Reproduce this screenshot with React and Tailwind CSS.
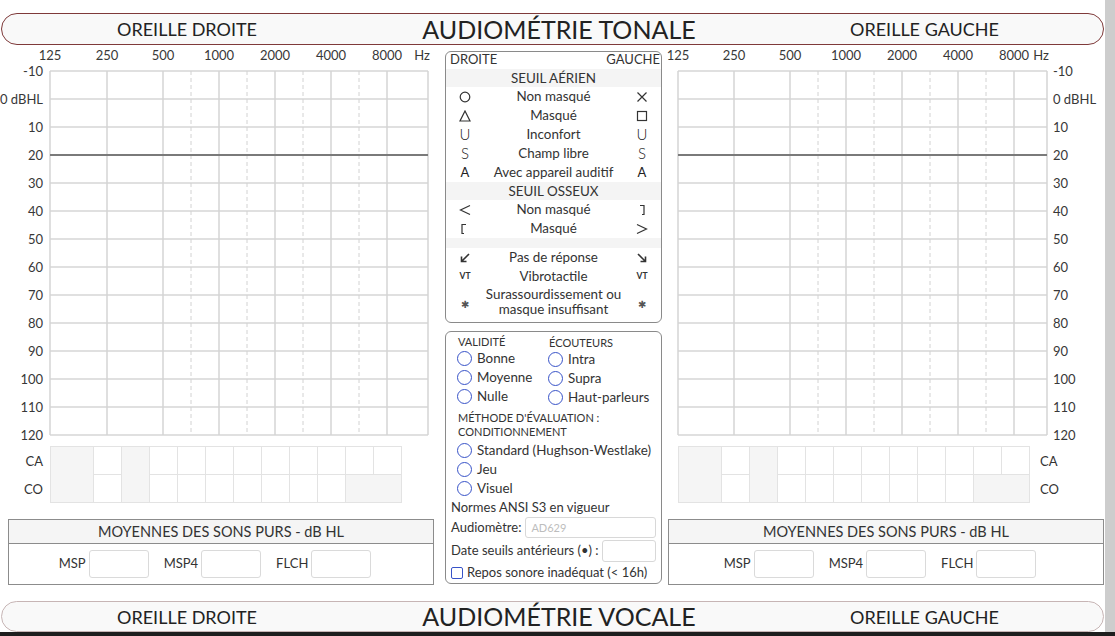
import React from 'react';

const leftCfg = {
  width: 445,
  x0: 50,
  offsets: [0, 57, 113, 141, 169, 197, 225, 253, 281, 309, 337],
  right: 428,
  hz: 422,
  yLabelX: 43,
  anchor: 'end',
};

const rightCfg = {
  width: 443,
  x0: 16,
  offsets: [0, 56, 112, 140, 168, 196, 224, 252, 280, 308, 336],
  right: 385,
  hz: 379,
  yLabelX: 391,
  anchor: 'start',
};

const freqs = [
  ['125', 0],
  ['250', 1],
  ['500', 2],
  ['1000', 4],
  ['2000', 6],
  ['4000', 8],
  ['8000', 10],
];

const levels = ['-10', '0 dBHL', '10', '20', '30', '40', '50', '60', '70', '80', '90', '100', '110', '120'];

// Audiogram grid (chart), labels kept as real svg text
function Audiogram({ cfg }) {
  const top = 26;
  const rowH = 28;
  const bottom = top + rowH * 13;
  const x0 = cfg.x0;
  return (
    <svg width={cfg.width} height={400} className="block" fill="#383838">
      {freqs.map(([f, i]) => (
        <text key={f} x={x0 + cfg.offsets[i]} y={15} textAnchor="middle" fontSize="13">
          {f}
        </text>
      ))}
      <text x={cfg.hz} y={15} textAnchor="middle" fontSize="13">
        Hz
      </text>

      {levels.map((l, i) =>
        i === 3 ? null : (
          <line key={l} x1={x0} x2={cfg.right} y1={top + i * rowH} y2={top + i * rowH} stroke="#d6d6d6" strokeWidth="1.5" />
        )
      )}
      {cfg.offsets.map((o, i) => {
        const dashed = i === 3 || i === 5 || i === 7 || i === 9;
        return (
          <line
            key={o}
            x1={x0 + o}
            x2={x0 + o}
            y1={top}
            y2={bottom}
            stroke={dashed ? '#d2d2d2' : '#d4d4d4'}
            strokeWidth={dashed ? 1 : 1.5}
            strokeDasharray={dashed ? '4 3' : undefined}
          />
        );
      })}
      <line x1={cfg.right} x2={cfg.right} y1={top} y2={bottom} stroke="#d4d4d4" strokeWidth="1.5" />
      <line x1={x0} x2={cfg.right} y1={top + 3 * rowH} y2={top + 3 * rowH} stroke="#7a7a7a" strokeWidth="2" />

      {levels.map((l, i) => (
        <text key={l} x={cfg.yLabelX} y={top + i * rowH + 4.5} textAnchor={cfg.anchor} fontSize="13">
          {l}
        </text>
      ))}
    </svg>
  );
}

function MaskingTable() {
  return (
    <div className="grid w-max grid-cols-[42px_repeat(11,27px)] grid-rows-[27px_27px] gap-px bg-[#e3e3e3] p-px">
      <div className="col-start-1 row-span-2 row-start-1 bg-[#f5f5f5]" />
      <div className="col-start-2 row-start-1 bg-white" />
      <div className="col-start-3 row-span-2 row-start-1 bg-[#f5f5f5]" />
      <div className="col-start-4 row-start-1 bg-white" />
      <div className="col-start-5 row-start-1 bg-white" />
      <div className="col-start-6 row-start-1 bg-white" />
      <div className="col-start-7 row-start-1 bg-white" />
      <div className="col-start-8 row-start-1 bg-white" />
      <div className="col-start-9 row-start-1 bg-white" />
      <div className="col-start-10 row-start-1 bg-white" />
      <div className="col-start-11 row-start-1 bg-white" />
      <div className="col-start-12 row-start-1 bg-white" />
      <div className="col-start-2 row-start-2 bg-white" />
      <div className="col-start-4 row-start-2 bg-white" />
      <div className="col-start-5 row-start-2 bg-white" />
      <div className="col-start-6 row-start-2 bg-white" />
      <div className="col-start-7 row-start-2 bg-white" />
      <div className="col-start-8 row-start-2 bg-white" />
      <div className="col-start-9 row-start-2 bg-white" />
      <div className="col-start-10 row-start-2 bg-white" />
      <div className="col-span-2 col-start-11 row-start-2 bg-[#f5f5f5]" />
    </div>
  );
}

function Averages({ className }) {
  return (
    <div className={`border border-[#8c8c8c] text-[13px] ${className}`}>
      <div className="h-[24px] border-b border-[#8c8c8c] bg-[#f5f5f5] text-center text-[14.5px] leading-[23px]">
        MOYENNES DES SONS PURS - dB HL
      </div>
      <div className="flex h-[40px] items-center justify-center gap-[15px] pr-[12px]">
        {['MSP', 'MSP4', 'FLCH'].map((l) => (
          <div key={l} className="flex items-center gap-[3px]">
            <span>{l}</span>
            <div className="h-[28px] w-[60px] rounded-[3px] border border-[#dadada] bg-white" />
          </div>
        ))}
      </div>
    </div>
  );
}

function SectionBar({ title, className }) {
  return (
    <div className={`mx-[1px] grid grid-cols-[370px_374px_1fr] items-center rounded-[16px] border bg-[#f9f9f9] text-[#222] ${className}`}>
      <div className="text-center text-[18px] leading-none">OREILLE DROITE</div>
      <div className="text-center text-[25px] leading-none">{title}</div>
      <div className="text-center text-[18px] leading-none">OREILLE GAUCHE</div>
    </div>
  );
}

const Mark = ({ children, sw = 1.2 }) => (
  <svg width="12" height="12" viewBox="0 0 12 12" fill="none" stroke="#333" strokeWidth={sw}>
    {children}
  </svg>
);

const Sym = ({ children, cls = 'text-[15px] font-light' }) => <span className={`leading-none text-[#222] ${cls}`}>{children}</span>;

const Circle = () => (
  <Mark>
    <circle cx="6" cy="6" r="4.8" />
  </Mark>
);
const Cross = () => (
  <Mark>
    <path d="M1.5 1.5 L10.5 10.5 M10.5 1.5 L1.5 10.5" />
  </Mark>
);
const Tri = () => (
  <Mark>
    <path d="M6 1 L11 11 L1 11 Z" />
  </Mark>
);
const Square = () => (
  <Mark>
    <rect x="1.5" y="1.5" width="9" height="9" />
  </Mark>
);
const LessThan = () => (
  <Mark>
    <path d="M11 1.5 L1.5 6 L11 10.5" />
  </Mark>
);
const GreaterThan = () => (
  <Mark>
    <path d="M1 1.5 L10.5 6 L1 10.5" />
  </Mark>
);
const BracketOpen = () => (
  <Mark>
    <path d="M7 1.5 L3 1.5 L3 10.5 L5 10.5" />
  </Mark>
);
const BracketClose = () => (
  <Mark>
    <path d="M4 1.5 L8 1.5 L8 10.5 L6 10.5" />
  </Mark>
);
const ArrowDL = () => (
  <Mark sw={1.6}>
    <path d="M10 2 L3 9 M2.5 4.5 L2.5 9.5 L7.5 9.5" />
  </Mark>
);
const ArrowDR = () => (
  <Mark sw={1.6}>
    <path d="M2 2 L9 9 M4.5 9.5 L9.5 9.5 L9.5 4.5" />
  </Mark>
);

const VT = () => <span className="text-[8.5px] font-bold leading-none text-[#333]">VT</span>;
const Star = () => <span className="text-[10px] leading-none text-[#555]">✱</span>;

const LegendRow = ({ l, label, r }) => (
  <div className="grid h-[19px] grid-cols-[38px_1fr_38px] items-center">
    <div className="flex justify-center">{l}</div>
    <div className="text-center leading-[19px]">{label}</div>
    <div className="flex justify-center">{r}</div>
  </div>
);

function Legend() {
  return (
    <div className="mt-[6px] h-[272px] rounded-[6px] border border-[#8a8a8a] text-[13.4px]">
      <div className="flex h-[17px] justify-between pl-[4px] pr-[1px] text-[13px] leading-[15px]">
        <span>DROITE</span>
        <span>GAUCHE</span>
      </div>
      <div className="h-[18px] bg-[#f4f4f4] text-center leading-[18px]">SEUIL AÉRIEN</div>
      <LegendRow l={<Circle />} label="Non masqué" r={<Cross />} />
      <LegendRow l={<Tri />} label="Masqué" r={<Square />} />
      <LegendRow l={<Sym>U</Sym>} label="Inconfort" r={<Sym>U</Sym>} />
      <LegendRow l={<Sym>S</Sym>} label="Champ libre" r={<Sym>S</Sym>} />
      <LegendRow l={<Sym cls="text-[13px] font-normal">A</Sym>} label="Avec appareil auditif" r={<Sym cls="text-[13px] font-normal">A</Sym>} />
      <div className="h-[18px] bg-[#f4f4f4] text-center leading-[18px]">SEUIL OSSEUX</div>
      <LegendRow l={<LessThan />} label="Non masqué" r={<BracketClose />} />
      <LegendRow l={<BracketOpen />} label="Masqué" r={<GreaterThan />} />
      <div className="h-[10px] bg-[#f4f4f4]" />
      <LegendRow l={<ArrowDL />} label="Pas de réponse" r={<ArrowDR />} />
      <LegendRow l={<VT />} label="Vibrotactile" r={<VT />} />
      <div className="grid h-[32px] grid-cols-[38px_1fr_38px] items-center">
        <div className="flex justify-center pt-[4px]">
          <Star />
        </div>
        <div className="text-center leading-[15px]">
          Surassourdissement ou
          <br />
          masque insuffisant
        </div>
        <div className="flex justify-center pt-[4px]">
          <Star />
        </div>
      </div>
    </div>
  );
}

const Radio = ({ label }) => (
  <div className="flex h-[19px] items-center gap-[5px]">
    <span className="h-[15px] w-[15px] shrink-0 rounded-full border border-[#3853c8]" />
    <span className="whitespace-nowrap">{label}</span>
  </div>
);

function Options() {
  return (
    <div className="mt-[8px] h-[253px] rounded-[6px] border border-[#8a8a8a] px-[5px] pt-[3px] text-[13.4px]">
      <div className="flex pl-[6px]">
        <div className="w-[91px]">
          <div className="h-[14px] pl-[1px] text-[11px] leading-[14px]">VALIDITÉ</div>
          <Radio label="Bonne" />
          <Radio label="Moyenne" />
          <Radio label="Nulle" />
        </div>
        <div className="pt-[1px]">
          <div className="h-[14px] pl-[1px] text-[11px] leading-[13px]">ÉCOUTEURS</div>
          <Radio label="Intra" />
          <Radio label="Supra" />
          <Radio label="Haut-parleurs" />
        </div>
      </div>
      <div className="mt-[4px] pl-[7px] text-[11px] leading-[14px]">
        MÉTHODE D'ÉVALUATION :
        <br />
        CONDITIONNEMENT
      </div>
      <div className="mt-[2px] pl-[6px]">
        <Radio label="Standard (Hughson-Westlake)" />
        <Radio label="Jeu" />
        <Radio label="Visuel" />
      </div>
      <div className="h-[19px] text-[13px] leading-[19px]">Normes ANSI S3 en vigueur</div>
      <div className="flex h-[21px] items-center gap-[4px] text-[13px]">
        <span>Audiomètre:</span>
        <div className="h-[21px] flex-1 rounded-[3px] border border-[#d8d8d8] pl-[5px] text-[11px] leading-[19px] text-[#bdbdbd]">
          AD629
        </div>
      </div>
      <div className="mt-[2px] flex h-[22px] items-center gap-[3px] text-[13px]">
        <span>Date seuils antérieurs (•) :</span>
        <div className="h-[22px] flex-1 rounded-[3px] border border-[#d8d8d8]" />
      </div>
      <div className="mt-[1px] flex h-[19px] items-center gap-[4px] text-[13px]">
        <span className="h-[12px] w-[12px] rounded-[2px] border border-[#3853c8]" />
        <span>Repos sonore inadéquat (&lt; 16h)</span>
      </div>
    </div>
  );
}

export default function App() {
  return (
    <div className="flex h-[636px] w-[1115px] flex-col overflow-hidden bg-white font-['Lato',sans-serif] text-[#333]">
      <div className="flex h-[632px]">
        <div className="flex w-[1105px] flex-col pt-[13px]">
          <SectionBar title="AUDIOMÉTRIE TONALE" className="h-[32px] border-[#7f3a3a]" />

          <div className="flex h-[556px]">
            {/* Oreille droite */}
            <div className="w-[445px]">
              <Audiogram cfg={leftCfg} />
              <div className="mt-[1px] flex">
                <div className="w-[50px] pr-[7px] pt-[1px] text-right text-[13px] leading-[28px]">
                  <div>CA</div>
                  <div>CO</div>
                </div>
                <MaskingTable />
              </div>
              <Averages className="ml-[8px] mt-[16px] h-[66px] w-[426px]" />
            </div>

            {/* Légende */}
            <div className="w-[217px]">
              <Legend />
              <Options />
            </div>

            {/* Oreille gauche */}
            <div className="w-[443px]">
              <Audiogram cfg={rightCfg} />
              <div className="mt-[1px] flex">
                <div className="ml-[16px]">
                  <MaskingTable />
                </div>
                <div className="ml-[10px] pt-[1px] text-[13px] leading-[28px]">
                  <div>CA</div>
                  <div>CO</div>
                </div>
              </div>
              <Averages className="ml-[6px] mt-[16px] h-[66px] w-[436px]" />
            </div>
          </div>

          <SectionBar title="AUDIOMÉTRIE VOCALE" className="h-[31px] border-[#c7b5b5]" />
        </div>
        <div className="w-[10px] bg-[#cdcdcd]" />
      </div>
      <div className="h-[4px] bg-[#1e1e1e]" />
    </div>
  );
}
